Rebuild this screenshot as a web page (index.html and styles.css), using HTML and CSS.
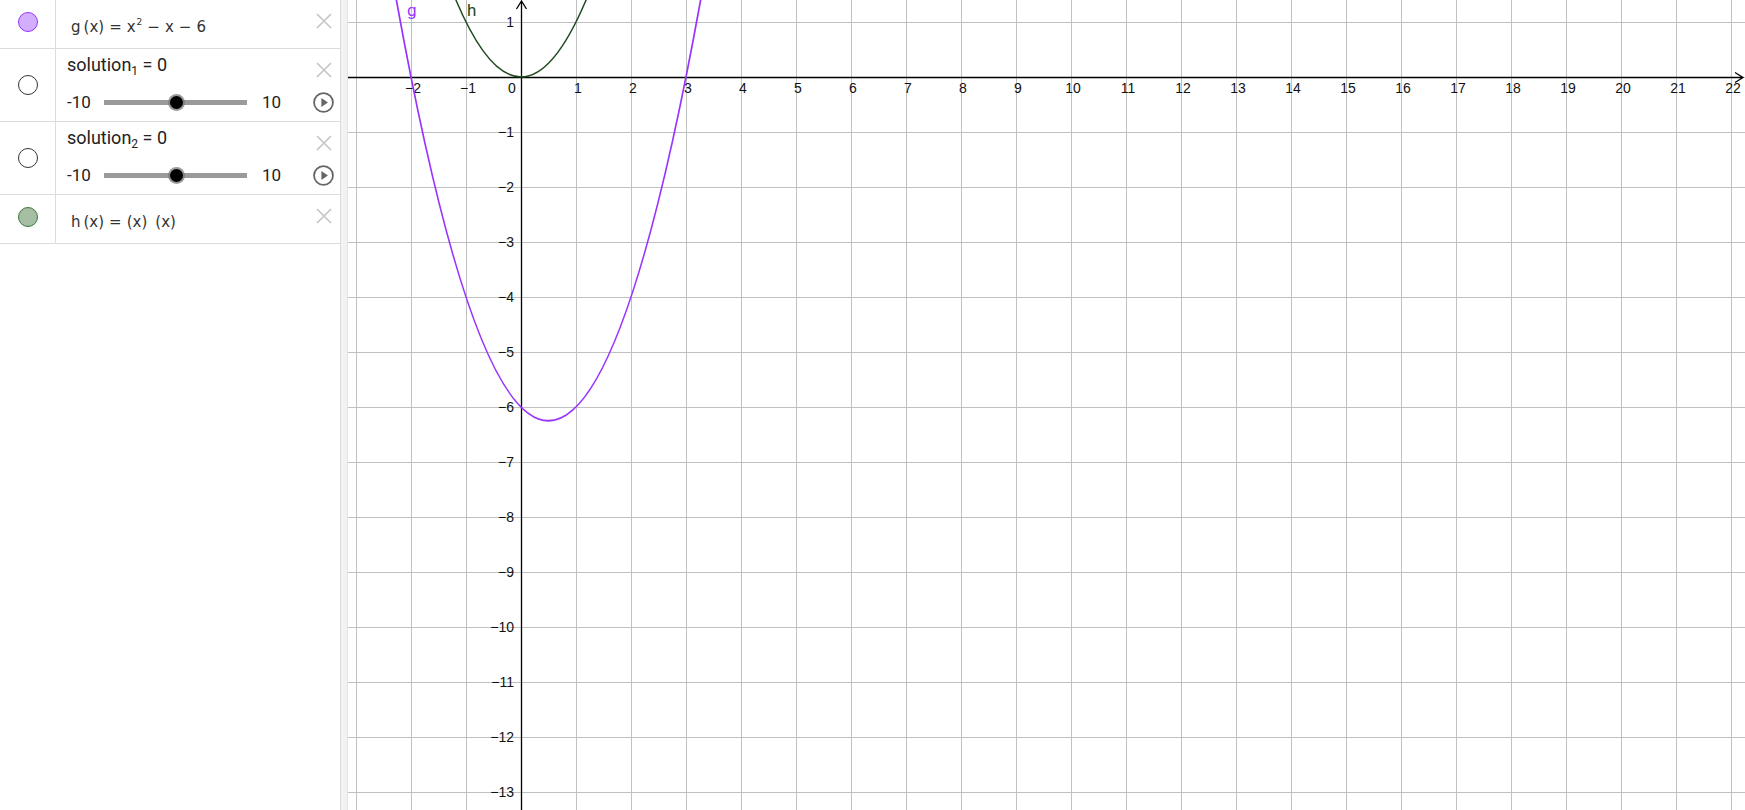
FILE: index.html
```html
<!DOCTYPE html>
<html>
<head>
<meta charset="utf-8">
<link rel="stylesheet" href="styles.css">
</head>
<body>
<div class="app">
  <div class="panel">
    <div class="row row-math">
      <div class="marble-col"><span class="marble marble-g"></span></div>
      <div class="content math">g<span class="paren">(x)</span><span class="op">=</span>x<sup>2</sup><span class="op">−</span>x<span class="op">−</span>6</div>
      <div class="actions"><svg class="del" viewBox="0 0 16 16"><path d="M1 1 L15 15 M15 1 L1 15"/></svg></div>
    </div>
    <div class="row row-slider">
      <div class="marble-col"><span class="marble marble-empty"></span></div>
      <div class="content">
        <div class="title">solution<sub>1</sub> = 0</div>
        <div class="slider">
          <span class="min">-10</span>
          <span class="track"><span class="thumb"></span></span>
          <span class="max">10</span>
        </div>
      </div>
      <div class="actions">
        <svg class="del" viewBox="0 0 16 16"><path d="M1 1 L15 15 M15 1 L1 15"/></svg>
        <svg class="play" viewBox="0 0 20 20"><circle cx="10" cy="10" r="9"/><path d="M8 5.8 L14.2 10 L8 14.2 Z"/></svg>
      </div>
    </div>
    <div class="row row-slider">
      <div class="marble-col"><span class="marble marble-empty"></span></div>
      <div class="content">
        <div class="title">solution<sub>2</sub> = 0</div>
        <div class="slider">
          <span class="min">-10</span>
          <span class="track"><span class="thumb"></span></span>
          <span class="max">10</span>
        </div>
      </div>
      <div class="actions">
        <svg class="del" viewBox="0 0 16 16"><path d="M1 1 L15 15 M15 1 L1 15"/></svg>
        <svg class="play" viewBox="0 0 20 20"><circle cx="10" cy="10" r="9"/><path d="M8 5.8 L14.2 10 L8 14.2 Z"/></svg>
      </div>
    </div>
    <div class="row row-math">
      <div class="marble-col"><span class="marble marble-h"></span></div>
      <div class="content math">h<span class="paren">(x)</span><span class="op">=</span>(x)<span class="gap"></span>(x)</div>
      <div class="actions"><svg class="del" viewBox="0 0 16 16"><path d="M1 1 L15 15 M15 1 L1 15"/></svg></div>
    </div>
  </div>
  <div class="splitter"></div>
  <div class="graph">
    <svg class="plot" width="1397" height="810" viewBox="0 0 1397 810">
      <defs>
        <pattern id="grid" x="8" y="22" width="55" height="55" patternUnits="userSpaceOnUse">
          <path d="M0.5 0 V55 M0 0.5 H55" stroke="#c0c0c0" stroke-width="1" fill="none"/>
        </pattern>
      </defs>
      <rect x="0" y="0" width="1397" height="810" fill="#fff"/>
      <rect x="0" y="0" width="1397" height="810" fill="url(#grid)"/>
      <g class="axes">
        <path d="M0 77.5 H1395 M1387 72.5 L1395 77.5 L1387 82.5 M173.5 810 V1 M168.5 9 L173.5 1 L178.5 9"/>
      </g>
      <g class="xlabels">
        <text x="65">−2</text>
        <text x="120">−1</text>
        <text x="164">0</text>
        <text x="230">1</text>
        <text x="285">2</text>
        <text x="340">3</text>
        <text x="395">4</text>
        <text x="450">5</text>
        <text x="505">6</text>
        <text x="560">7</text>
        <text x="615">8</text>
        <text x="670">9</text>
        <text x="725">10</text>
        <text x="780">11</text>
        <text x="835">12</text>
        <text x="890">13</text>
        <text x="945">14</text>
        <text x="1000">15</text>
        <text x="1055">16</text>
        <text x="1110">17</text>
        <text x="1165">18</text>
        <text x="1220">19</text>
        <text x="1275">20</text>
        <text x="1330">21</text>
        <text x="1385">22</text>
      </g>
      <g class="ylabels">
        <text y="27">1</text>
        <text y="137">−1</text>
        <text y="192">−2</text>
        <text y="247">−3</text>
        <text y="302">−4</text>
        <text y="357">−5</text>
        <text y="412">−6</text>
        <text y="467">−7</text>
        <text y="522">−8</text>
        <text y="577">−9</text>
        <text y="632">−10</text>
        <text y="687">−11</text>
        <text y="742">−12</text>
        <text y="797">−13</text>
      </g>
      <path class="curve-h" d="M85 -63.8 Q173 217.8 261 -63.8"/>
      <path class="curve-g" d="M-3 -332.2 Q200.5 1173.7 404 -332.2"/>
      <text class="lbl-g" x="59" y="16">g</text>
      <text class="lbl-h" x="119" y="16">h</text>
    </svg>
  </div>
</div>
</body>
</html>
```
FILE: styles.css
```css
html, body {
  margin: 0;
  padding: 0;
  background: #fff;
}
body {
  width: 1745px;
  height: 810px;
  overflow: hidden;
  font-family: Roboto, "Liberation Sans", sans-serif;
  color: #222;
}
.app {
  display: flex;
  height: 810px;
}
.panel {
  width: 340px;
  flex: none;
  border-right: 1px solid #dcdcdc;
  background: #fff;
}
.splitter {
  width: 6px;
  flex: none;
  background: #f2f2f2;
  border-right: 1px solid #e2e2e2;
}
.graph {
  flex: 1;
  overflow: hidden;
}
.plot {
  display: block;
}

.row {
  display: flex;
  border-bottom: 1px solid #dcdcdc;
}
.row-math { height: 48px; }
.row-slider { height: 72px; }

.marble-col {
  width: 56px;
  flex: none;
  border-right: 1px solid #dcdcdc;
  display: flex;
  justify-content: center;
  align-items: flex-start;
  padding-top: 12px;
  box-sizing: border-box;
}
.row-slider .marble-col {
  padding-top: 26px;
}
.marble {
  width: 18px;
  height: 18px;
  border-radius: 50%;
  display: block;
}
.marble-g {
  background: #d3aefe;
  border: 1px solid #9933ff;
}
.marble-h {
  background: #a5bea4;
  border: 1px solid #3d763c;
}
.marble-empty {
  background: #fff;
  border: 1px solid #333;
}

.content {
  flex: 1;
  min-width: 0;
}
.math {
  font-family: "DejaVu Sans", sans-serif;
  font-size: 15px;
  line-height: 20px;
  color: #333;
  padding-top: 17px;
  padding-left: 15px;
  white-space: nowrap;
}
.math .paren {
  margin-left: 3px;
}
.math .op {
  margin: 0 5px;
}
.math .gap {
  display: inline-block;
  width: 8px;
}
.math sup {
  font-size: 9px;
  line-height: 0;
  vertical-align: 7px;
  margin-left: 1px;
}

.row-slider .content {
  padding-left: 11px;
  padding-top: 4px;
}
.title {
  font-size: 18px;
  line-height: 24px;
  color: #222;
  white-space: nowrap;
}
.title sub {
  font-size: 12px;
  line-height: 0;
  vertical-align: -4px;
}
.slider {
  margin-top: 13px;
  height: 24px;
  display: flex;
  align-items: center;
  font-size: 17px;
  color: #222;
}
.slider .min {
  width: 37px;
  flex: none;
}
.track {
  position: relative;
  width: 143px;
  height: 5px;
  background: #9a9a9a;
  flex: none;
}
.thumb {
  position: absolute;
  left: 66px;
  top: -4px;
  width: 13px;
  height: 13px;
  border-radius: 50%;
  background: #000;
  box-shadow: 0 0 0 2px rgba(120,120,120,0.75);
}
.slider .max {
  margin-left: 15px;
}

.actions {
  width: 33px;
  flex: none;
  display: flex;
  flex-direction: column;
  align-items: center;
}
.del {
  width: 16px;
  height: 16px;
  margin-top: 13px;
  display: block;
}
.del path {
  stroke: #c4c4c4;
  stroke-width: 1.6;
  fill: none;
}
.play {
  width: 21px;
  height: 21px;
  margin-top: 14px;
  display: block;
}
.play circle {
  fill: none;
  stroke: #666;
  stroke-width: 1.7;
}
.play path {
  fill: #666;
}

.axes path {
  stroke: #000;
  stroke-width: 1.3;
  fill: none;
}
.xlabels text {
  font-family: "Liberation Sans", Arial, sans-serif;
  font-size: 14px;
  fill: #111;
  text-anchor: middle;
}
.xlabels {
  transform: translateY(93px);
}
.ylabels text {
  font-family: "Liberation Sans", Arial, sans-serif;
  font-size: 14px;
  fill: #111;
  text-anchor: end;
}
.ylabels {
  transform: translateX(166px);
}
.curve-g {
  fill: none;
  stroke: #9933ff;
  stroke-width: 1.8;
}
.curve-h {
  fill: none;
  stroke: #1e4a1e;
  stroke-width: 1.5;
}
.lbl-g, .lbl-h {
  font-family: Roboto, "Liberation Sans", sans-serif;
  font-size: 17px;
}
.lbl-g { fill: #9933ff; }
.lbl-h { fill: #1e4a1e; }
```
